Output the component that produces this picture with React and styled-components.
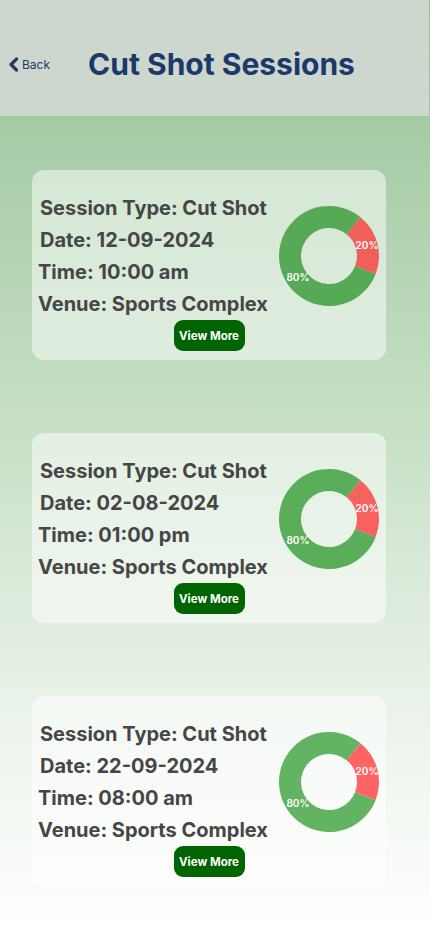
import React from "react";
import styled, { createGlobalStyle } from "styled-components";

const Global = createGlobalStyle`
  html, body { margin: 0; padding: 0; }
  body {
    font-family: Inter, "Noto Sans", sans-serif;
    background: #ffffff;
  }
`;

const Page = styled.div`
  width: 430px;
  min-height: 932px;
  background: linear-gradient(180deg, #98c397 0%, #c6dfc5 45%, #e9f2e8 75%, #ffffff 100%);
  display: flex;
  flex-direction: column;
`;

const Header = styled.header`
  height: 116px;
  width: 429px;
  background: #cdd7cd;
  display: flex;
  align-items: center;
  padding: 12px 0 0 8px;
  box-sizing: border-box;
`;

const BackButton = styled.button`
  display: flex;
  align-items: center;
  gap: 3px;
  border: 0;
  background: none;
  padding: 0;
  color: #1e3a6e;
  font-family: Inter, sans-serif;
  font-size: 12px;
  cursor: pointer;
  margin-right: 38px;
`;

const Title = styled.h1`
  margin: 0;
  font-size: 30px;
  font-weight: 700;
  color: #1b3a6b;
`;

const List = styled.main`
  display: flex;
  flex-direction: column;
  gap: 73px;
  padding: 54px 44px 40px 32px;
`;

const Card = styled.section`
  width: 354px;
  height: 190px;
  box-sizing: border-box;
  border-radius: 12px;
  background: rgba(255, 255, 255, 0.5);
  padding: 22px 6px 9px 6px;
  display: flex;
  flex-direction: column;
  align-items: center;
`;

const Row = styled.div`
  width: 100%;
  display: flex;
  align-items: center;
  justify-content: space-between;
`;

const Info = styled.div`
  display: flex;
  flex-direction: column;
`;

const Line = styled.div`
  font-size: 20px;
  font-weight: 700;
  line-height: 32px;
  color: #464646;
  padding-left: ${(p) => p.$indent || 0}px;
  white-space: nowrap;
`;

const ViewMore = styled.button`
  width: 71px;
  height: 31px;
  border: 0;
  border-radius: 9px;
  background: #006400;
  color: #ffffff;
  font-family: Inter, sans-serif;
  font-weight: 700;
  font-size: 11.5px;
  padding: 0;
  cursor: pointer;
`;

const Chevron = () => (
  <svg width="11" height="15" viewBox="0 0 11 15">
    <path d="M8.5 2 L3 7.5 L8.5 13" fill="none" stroke="#1e3a6e" strokeWidth="3.2" strokeLinecap="round" strokeLinejoin="round" />
  </svg>
);

function arc(cx, cy, rO, rI, a0, a1) {
  const rad = (a) => ((a - 90) * Math.PI) / 180;
  const p = (r, a) => [cx + r * Math.cos(rad(a)), cy + r * Math.sin(rad(a))];
  const large = a1 - a0 > 180 ? 1 : 0;
  const [x0, y0] = p(rO, a0);
  const [x1, y1] = p(rO, a1);
  const [x2, y2] = p(rI, a1);
  const [x3, y3] = p(rI, a0);
  return `M${x0} ${y0} A${rO} ${rO} 0 ${large} 1 ${x1} ${y1} L${x2} ${y2} A${rI} ${rI} 0 ${large} 0 ${x3} ${y3} Z`;
}

const Donut = ({ green, red }) => (
  <svg width="102" height="102" viewBox="0 0 102 102">
    <path d={arc(51, 51, 50, 28, 111, 399)} fill={green} />
    <path d={arc(51, 51, 50, 28, 39, 111)} fill={red} />
    <text x="89" y="43.5" textAnchor="middle" fill="#fff" fontSize="10" fontWeight="600" fontFamily="Inter, sans-serif">20%</text>
    <text x="20" y="75.5" textAnchor="middle" fill="#fff" fontSize="10" fontWeight="600" fontFamily="Inter, sans-serif">80%</text>
  </svg>
);

const sessions = [
  { date: "12-09-2024", time: "10:00 am", green: "#56aa55", red: "#f05f5a" },
  { date: "02-08-2024", time: "01:00 pm", green: "#5aae59", red: "#f7625e" },
  { date: "22-09-2024", time: "08:00 am", green: "#62b362", red: "#ff6464" },
];

export default function App() {
  return (
    <>
      <Global />
      <Page>
        <Header>
          <BackButton>
            <Chevron />
            Back
          </BackButton>
          <Title>Cut Shot Sessions</Title>
        </Header>
        <List>
          {sessions.map((s) => (
            <Card key={s.date}>
              <Row>
                <Info>
                  <Line $indent={2}>Session Type: Cut Shot</Line>
                  <Line $indent={2}>Date: {s.date}</Line>
                  <Line>Time: {s.time}</Line>
                  <Line>Venue: Sports Complex</Line>
                </Info>
                <Donut green={s.green} red={s.red} />
              </Row>
              <ViewMore>View More</ViewMore>
            </Card>
          ))}
        </List>
      </Page>
    </>
  );
}
